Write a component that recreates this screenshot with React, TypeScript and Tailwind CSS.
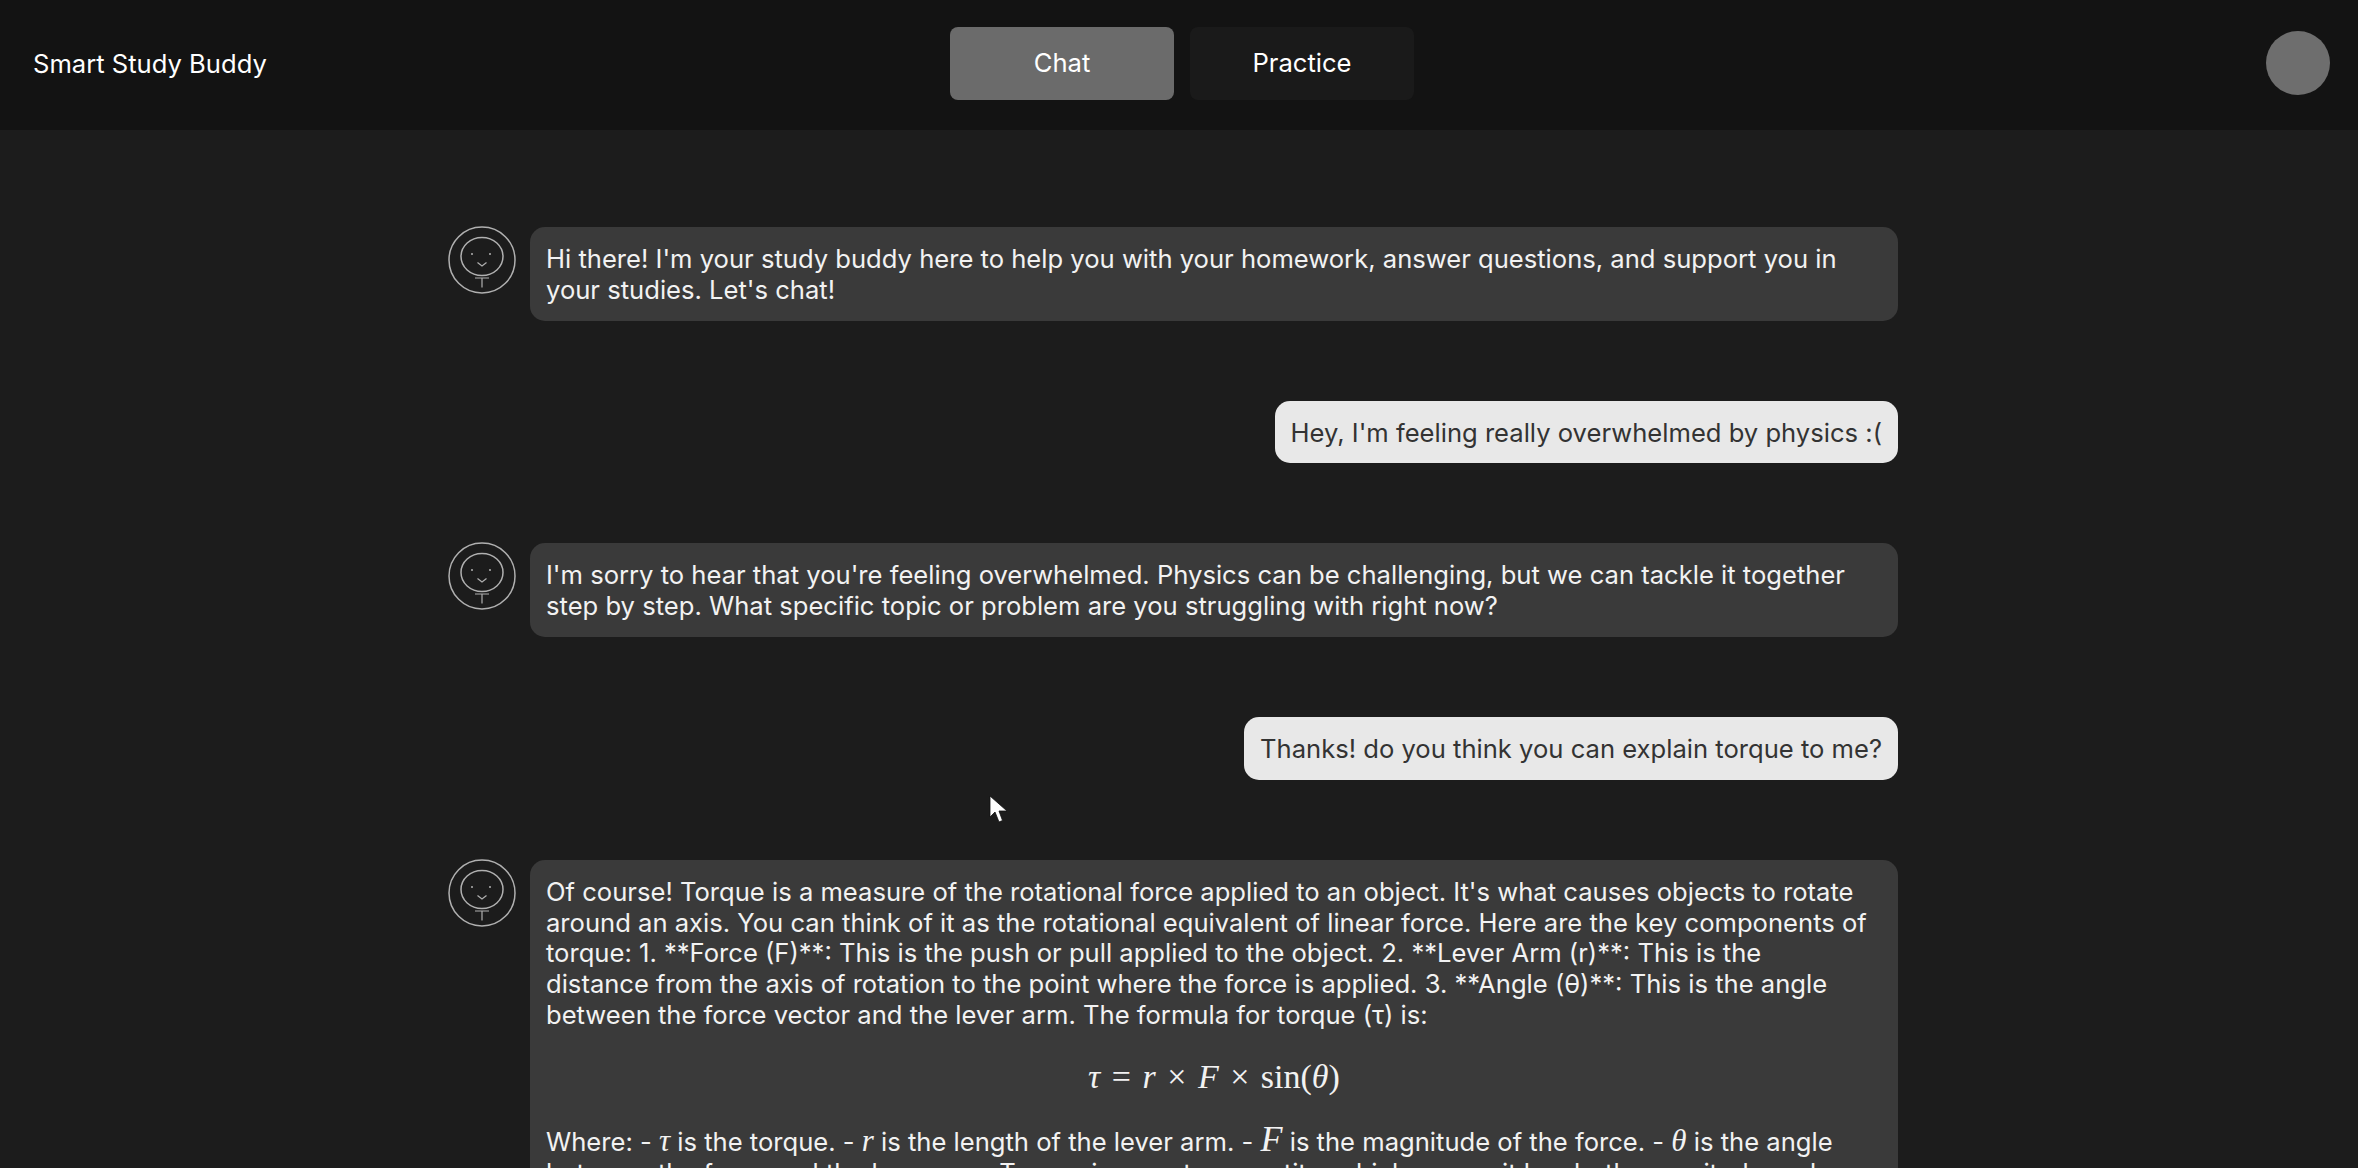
const font = { fontFamily: 'Inter, "Noto Sans", sans-serif' };

function BotAvatar() {
  return (
    <svg viewBox="0 0 70 70" className="w-[70px] h-[70px] shrink-0 -mt-[2px]" fill="none" stroke="#b0b0b0" strokeWidth="1.5">
      <circle cx="35" cy="35" r="33" />
      <ellipse cx="35" cy="31.5" rx="21" ry="19" />
      <circle cx="25" cy="29" r="1" fill="#b0b0b0" stroke="none" />
      <circle cx="43" cy="29" r="1" fill="#b0b0b0" stroke="none" />
      <path d="M30.5 37.5 L35 41 L39.5 37.5" strokeWidth="1.2" />
      <path d="M35 52.5 V62.5 M28 53 H42" strokeWidth="1.2" />
    </svg>
  );
}

function BotMessage({ children }: { children: React.ReactNode }) {
  return (
    <div className="flex gap-[13px] items-start">
      <BotAvatar />
      <div className="flex-1 min-w-0 bg-[#3a3a3a] rounded-[15px] pl-4 pt-[17px] pb-[15px] pr-[29px] text-[#f2f2f2] text-[25.6px] leading-[30.8px]">
        {children}
      </div>
    </div>
  );
}

function UserMessage({ children }: { children: React.ReactNode }) {
  return (
    <div className="flex justify-end">
      <div className="bg-[#e8e8e8] rounded-[15px] px-4 pt-[17px] pb-[15px] text-[#333333] text-[25.6px] leading-[30.8px]">
        {children}
      </div>
    </div>
  );
}

const M = ({ children, big }: { children: React.ReactNode; big?: boolean }) => (
  <span className={big ? "italic text-[36px] leading-[20px]" : "italic text-[31px] leading-[20px]"} style={{ fontFamily: '"Liberation Serif", serif' }}>
    {children}
  </span>
);

export default function App() {
  return (
    <div className="h-screen overflow-hidden bg-[#1c1c1c] flex flex-col" style={font}>
      <header className="h-[130px] shrink-0 bg-[#131313] relative flex items-center justify-between pl-[33px] pr-[28px]">
        <div className="text-white text-[25.6px] mb-[2px]">Smart Study Buddy</div>
        <nav className="absolute left-[950px] top-[27px] flex gap-4">
          <button className="w-[224px] h-[73px] rounded-lg bg-[#6b6b6b] text-white text-[25.6px]">Chat</button>
          <button className="w-[224px] h-[73px] rounded-lg bg-[#1a1a1a] text-white text-[25.6px]">Practice</button>
        </nav>
        <div className="w-16 h-16 rounded-full bg-[#6e6e6e] mb-[4px]" />
      </header>
      <main className="flex-1 overflow-hidden relative pt-[97px] pl-[447px] pr-[460px] flex flex-col gap-[80px]">
        <BotMessage>
          Hi there! I'm your study buddy here to help you with your homework, answer questions, and support you in your studies. Let's chat!
        </BotMessage>
        <UserMessage>Hey, I'm feeling really overwhelmed by physics :(</UserMessage>
        <BotMessage>
          I'm sorry to hear that you're feeling overwhelmed. Physics can be challenging, but we can tackle it together step by step. What specific topic or problem are you struggling with right now?
        </BotMessage>
        <UserMessage>Thanks! do you think you can explain torque to me?</UserMessage>
        <BotMessage>
          <p>
            Of course! Torque is a measure of the rotational force applied to an object. It's what causes objects to rotate around an axis. You can think of it as the rotational equivalent of linear force. Here are the key components of torque: 1. **Force (F)**: This is the push or pull applied to the object. 2. **Lever Arm (r)**: This is the distance from the axis of rotation to the point where the force is applied. 3. **Angle (θ)**: This is the angle between the force vector and the lever arm. The formula for torque (τ) is:
          </p>
          <p className="text-center -mr-[13px] text-[34px] leading-[36px] mt-[28px] mb-[32px] [word-spacing:3px]" style={{ fontFamily: '"Liberation Serif", serif' }}>
            <i>τ</i> = <i>r</i> × <i>F</i> × sin(<i>θ</i>)
          </p>
          <p>
            Where: - <M>τ</M> is the torque. - <M>r</M> is the length of the lever arm. - <M big>F</M> is the magnitude of the force. - <M>θ</M> is the angle between the force and the lever arm. Torque is a vector quantity, which means it has both magnitude and direction.
          </p>
        </BotMessage>
        <svg viewBox="0 0 20 28" className="absolute left-[989px] top-[665px] w-[20px] h-[28px]">
          <path d="M1 1 V22 L6 17 L10 27 L13.5 25.5 L10 16 H18 Z" fill="#ffffff" stroke="#111111" strokeWidth="0.8" />
        </svg>
      </main>
    </div>
  );
}
